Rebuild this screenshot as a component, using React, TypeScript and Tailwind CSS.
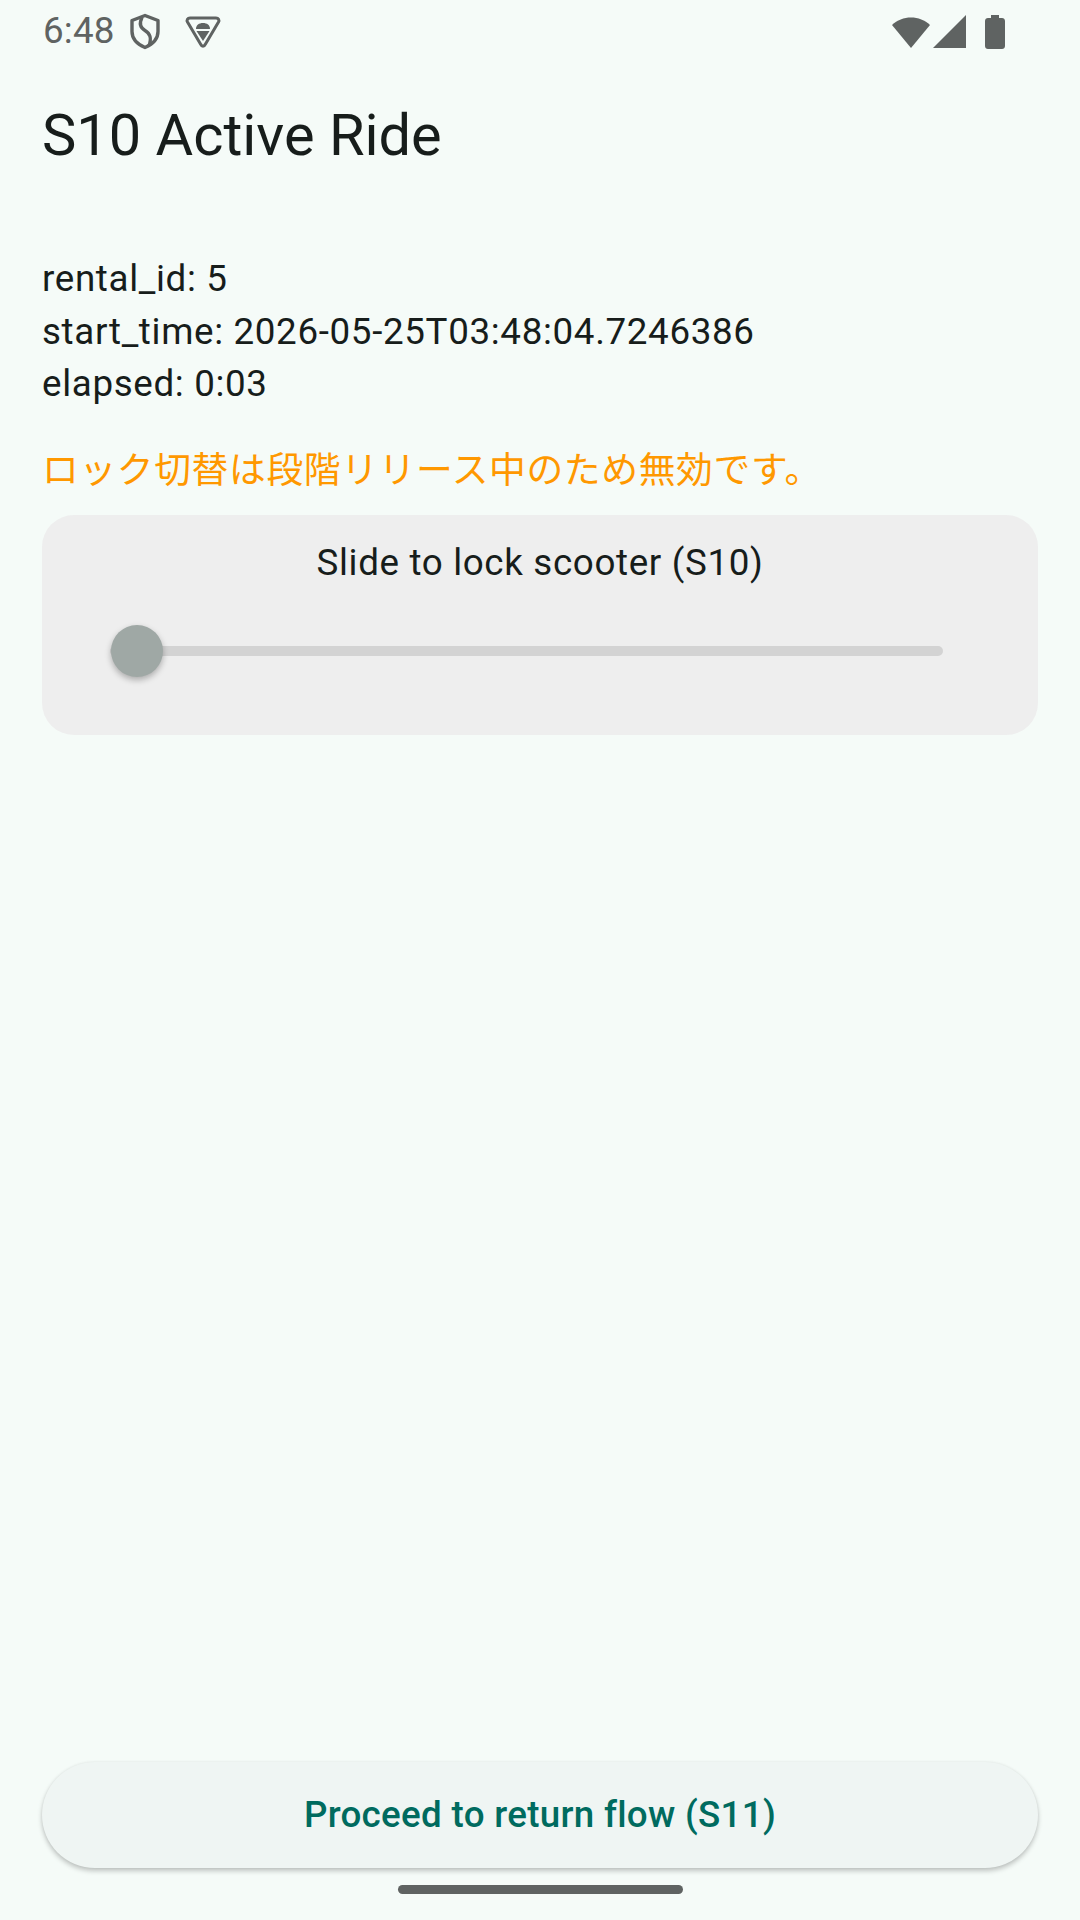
const bodyFont = "font-['Roboto','Noto_Sans_CJK_JP',sans-serif]";

function StatusBar() {
  return (
    <div className="flex h-[63px] items-center justify-between pl-[43px] pr-[75px] text-[#5f6362]">
      <div className="flex items-center">
        <span className="text-[36.750px] leading-none tracking-[0.2px]">6:48</span>
        <svg className="ml-[14px]" width="32" height="37" viewBox="0 0 32 36" fill="none" stroke="currentColor" strokeWidth="3.4">
          <path d="M16 2 L29 7 V18 C29 26 23 31 16 34 C9 31 3 26 3 18 V7 Z" strokeLinejoin="round" />
          <path d="M13 4 C10 10 11 14 16 17 C21 20 23 24 20 32" />
        </svg>
        <svg className="ml-[24px]" width="36" height="34" viewBox="0 0 36 34" fill="none">
          <path d="M5 3 H31 C33.500 3 34.500 5 33.500 7 L20.500 29 C19 32 17 32 15.500 29 L2.500 7 C1.500 5 2.500 3 5 3 Z" stroke="currentColor" strokeWidth="3" strokeLinejoin="round" />
          <path d="M11 14 C11 10 14 8 18 8 C22 8 25 10 25 14 Z" fill="currentColor" />
          <path d="M11.500 16 H24.500 L18 26 Z" fill="currentColor" />
        </svg>
      </div>
      <div className="flex items-center">
        <svg width="40" height="33" viewBox="0 0 40 33" fill="currentColor">
          <path d="M1 10 C11 0 29 0 39 10 L20 33 Z" />
        </svg>
        <svg className="ml-[2px]" width="33" height="33" viewBox="0 0 33 33" fill="currentColor">
          <path d="M33 0 V33 H0 Z" />
        </svg>
        <svg className="ml-[19px]" width="20" height="34" viewBox="0 0 20 34" fill="currentColor">
          <path d="M6 0 H14 V3 H17 C18.700 3 20 4.300 20 6 V31 C20 32.700 18.700 34 17 34 H3 C1.300 34 0 32.700 0 31 V6 C0 4.300 1.300 3 3 3 H6 Z" />
        </svg>
      </div>
    </div>
  );
}

export default function App() {
  return (
    <div className={`${bodyFont} flex h-[1920px] w-[1080px] flex-col overflow-hidden bg-[#f5fbf8] text-[#171d1b]`}>
      <StatusBar />

      <div className="flex flex-1 flex-col px-[42px]">
        <h1 className="mt-[36px] text-[57.750px] font-normal leading-[72px]">S10 Active Ride</h1>

        <div className="mt-[82px] text-[36.750px] leading-[52.500px] tracking-[0.656px]">
          <p>rental_id: 5</p>
          <p>start_time: 2026-05-25T03:48:04.7246386</p>
          <p>elapsed: 0:03</p>
        </div>

        <p className="mt-[34px] text-[36.750px] leading-[52.500px] tracking-[0.656px] text-[#ff9800]">ロック切替は段階リリース中のため無効です。</p>

        <div className="mt-[18px] h-[220px] rounded-[32px] bg-[#eeeeee] pl-[68px] pr-[95px] pt-[22px]">
          <p className="-mr-[27px] text-center text-[36.750px] leading-[52.500px] tracking-[0.656px]">Slide to lock scooter (S10)</p>
          <div className="relative mt-[35px] h-[52px]">
            <div className="absolute left-0 right-0 top-[21px] h-[10px] rounded-full bg-[#d3d3d3]" />
            <div className="absolute left-[1px] top-0 h-[52px] w-[52px] rounded-full bg-[#9fa8a5] shadow-[0_3px_6px_rgba(0,0,0,0.28)]" />
          </div>
        </div>

        <button className="mt-auto h-[106px] w-full rounded-full bg-[#eff5f3] text-center text-[36.750px] font-medium tracking-[0.3px] text-[#006b5f] shadow-[0_3px_5px_rgba(0,0,0,0.22),0_0_3px_rgba(0,0,0,0.06)]">
          Proceed to return flow (S11)
        </button>
      </div>

      <div className="flex h-[52px] items-start justify-center">
        <div className="mt-[17px] h-[9px] w-[285px] rounded-full bg-[#5f6362]" />
      </div>
    </div>
  );
}
